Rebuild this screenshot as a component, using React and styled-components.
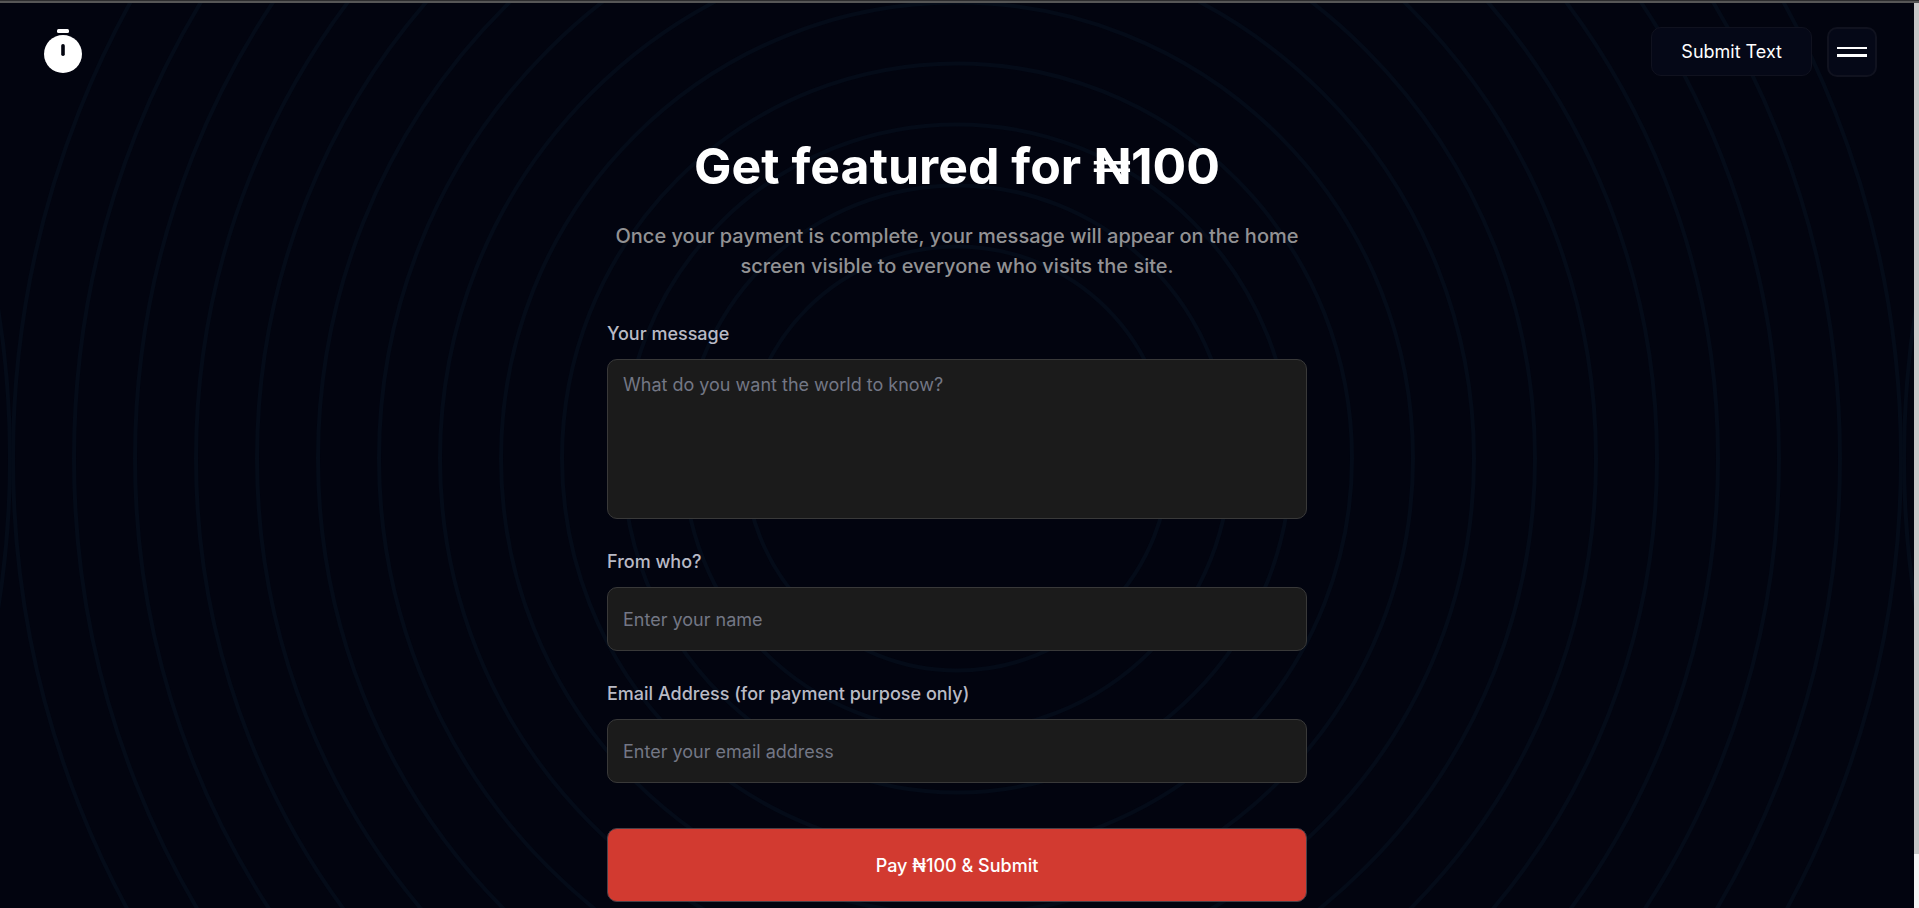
import styled, { createGlobalStyle } from "styled-components";

const GlobalStyle = createGlobalStyle`
  * {
    box-sizing: border-box;
  }

  body {
    margin: 0;
    background: #02040f;
    color: #fff;
    font-family: Inter, "Liberation Sans", sans-serif;
  }

  #root {
    height: 100vh;
  }
`;

const Window = styled.div`
  height: 100%;
  display: flex;
  flex-direction: column;
  overflow: hidden;
`;

const TopEdge = styled.div`
  flex: none;
  height: 3px;
  background: #565656;
  border-top: 1px solid #2d2d2f;
`;

const Body = styled.div`
  flex: 1;
  min-height: 0;
  display: flex;
`;

const Page = styled.div`
  flex: 1;
  position: relative;
  overflow: hidden;
`;

const ScrollTrack = styled.div`
  flex: none;
  width: 5px;
  background: #f5f5f5;
`;

const ScrollThumb = styled.div`
  height: 94%;
  background: #c9c9c9;
`;

const Backdrop = styled.svg`
  position: absolute;
  inset: 0;
  width: 100%;
  height: 100%;
  fill: none;
  stroke: #040b18;
  stroke-width: 4px;
`;

const Content = styled.div`
  position: relative;
  display: flex;
  flex-direction: column;
`;

const Header = styled.header`
  display: flex;
  justify-content: space-between;
  align-items: center;
  padding: 24px 37px 0 44px;
`;

const LogoLink = styled.a`
  display: flex;

  svg {
    width: 38px;
    height: 46px;
  }
`;

const Actions = styled.div`
  display: flex;
  align-items: flex-start;
  gap: 15px;
`;

const SubmitLink = styled.a`
  display: flex;
  align-items: center;
  height: 49px;
  padding: 0 29px;
  border: 1px solid #10121f;
  border-radius: 10px;
  background: #050817;
  color: #fff;
  font-size: 18px;
  text-decoration: none;
`;

const MenuButton = styled.button`
  display: flex;
  flex-direction: column;
  justify-content: center;
  align-items: center;
  gap: 5px;
  width: 50px;
  height: 50px;
  padding: 0;
  border: 2px solid #10121f;
  border-radius: 10px;
  background: #050817;
  cursor: pointer;
`;

const MenuBar = styled.span`
  width: 30px;
  height: ${({ $thick }) => ($thick ? 3 : 2)}px;
  background: #fff;
`;

const Main = styled.main`
  width: 100%;
  max-width: 700px;
  margin: 0 auto;
  padding-top: 60px;
`;

const Title = styled.h1`
  margin: 0;
  font-size: 50px;
  font-weight: 700;
  line-height: 58px;
  text-align: center;
`;

const Intro = styled.p`
  margin: 26px 0 40px;
  color: #929294;
  font-size: 20px;
  font-weight: 500;
  line-height: 30px;
  text-align: center;
`;

const Form = styled.form`
  display: flex;
  flex-direction: column;
`;

const Field = styled.div`
  display: flex;
  flex-direction: column;
  gap: 12px;
  margin-bottom: 30px;
`;

const Label = styled.label`
  color: #b9bac5;
  font-size: 18px;
  font-weight: 500;
  line-height: 26px;
`;

const Input = styled.input`
  width: 100%;
  height: 64px;
  padding: 0 15px;
  border: 1px solid #393939;
  border-radius: 10px;
  background: #1b1b1b;
  color: #fff;
  font-family: inherit;
  font-size: 18px;
  line-height: 26px;

  &::placeholder {
    color: #737785;
  }
`;

const TextArea = styled(Input)`
  height: 160px;
  padding: 12px 15px;
  resize: none;
`;

const PayButton = styled.button`
  height: 74px;
  margin-top: 15px;
  border: 1px solid #4b4048;
  border-radius: 10px;
  background: #d23a30;
  color: #fff;
  font-family: inherit;
  font-size: 18px;
  font-weight: 500;
  cursor: pointer;
`;

const RING_COUNT = 13;
const RING_START = 212;
const RING_GAP = 61;
const TILE_WIDTH = 1891;

const radii = Array.from(
  { length: RING_COUNT },
  (_, i) => RING_START + i * RING_GAP
);

function Rings() {
  return (
    <Backdrop aria-hidden="true">
      <svg x="50%" y="50%" overflow="visible">
        {[-TILE_WIDTH, 0, TILE_WIDTH].map((cx) =>
          radii.map((r) => <circle key={`${cx}-${r}`} cx={cx} cy={3} r={r} />)
        )}
      </svg>
    </Backdrop>
  );
}

function TimerLogo() {
  return (
    <svg viewBox="0 0 38 46" aria-hidden="true">
      <rect x="13" y="0" width="12" height="4" rx="1.5" fill="#fff" />
      <circle cx="19" cy="25" r="19" fill="#fff" />
      <rect x="17.2" y="15" width="3.6" height="12" rx="1.8" fill="#02040f" />
    </svg>
  );
}

export default function App() {
  return (
    <Window>
      <GlobalStyle />
      <TopEdge />
      <Body>
        <Page>
          <Rings />
          <Content>
            <Header>
              <LogoLink href="#" aria-label="Home">
                <TimerLogo />
              </LogoLink>
              <Actions>
                <SubmitLink href="#submit">Submit Text</SubmitLink>
                <MenuButton type="button" aria-label="Menu">
                  <MenuBar />
                  <MenuBar $thick />
                </MenuButton>
              </Actions>
            </Header>
            <Main>
              <Title>Get featured for ₦100</Title>
              <Intro>
                Once your payment is complete, your message will appear on the
                home screen visible to everyone who visits the site.
              </Intro>
              <Form id="submit" onSubmit={(e) => e.preventDefault()}>
                <Field>
                  <Label htmlFor="message">Your message</Label>
                  <TextArea
                    as="textarea"
                    id="message"
                    placeholder="What do you want the world to know?"
                  />
                </Field>
                <Field>
                  <Label htmlFor="name">From who?</Label>
                  <Input id="name" type="text" placeholder="Enter your name" />
                </Field>
                <Field>
                  <Label htmlFor="email">
                    Email Address (for payment purpose only)
                  </Label>
                  <Input
                    id="email"
                    type="email"
                    placeholder="Enter your email address"
                  />
                </Field>
                <PayButton type="submit">Pay ₦100 &amp; Submit</PayButton>
              </Form>
            </Main>
          </Content>
        </Page>
        <ScrollTrack>
          <ScrollThumb />
        </ScrollTrack>
      </Body>
    </Window>
  );
}
